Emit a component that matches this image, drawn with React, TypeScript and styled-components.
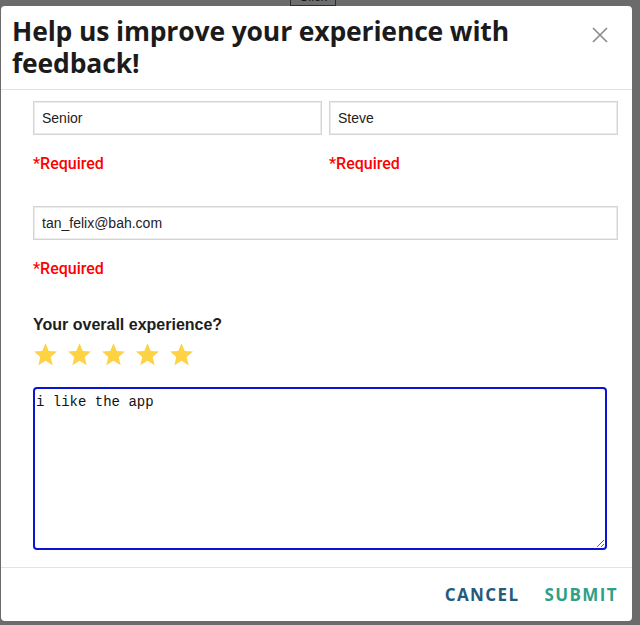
import React from "react";
import styled, { createGlobalStyle } from "styled-components";

const Global = createGlobalStyle`
  html, body { margin: 0; padding: 0; }
  body { background: #6b6b6b; font-family: "Liberation Sans", Arial, sans-serif; }
`;

const Page = styled.div`
  width: 640px;
  height: 625px;
  background: #6b6b6b;
  overflow: hidden;
  display: flex;
  flex-direction: column;
  align-items: flex-start;
`;

const BehindStrip = styled.div`
  height: 6px;
  width: 100%;
  overflow: hidden;
  display: flex;
  justify-content: center;
  align-items: flex-end;
`;

const BehindButton = styled.button`
  margin-left: -14px;
  height: 18px;
  padding: 0 8px;
  background: #6e6e6e;
  border: 1px solid #2e2e2e;
  color: #1a1a1a;
  font: 13px "Liberation Sans", Arial, sans-serif;
  line-height: 16px;
  display: flex;
  align-items: flex-end;
`;

const Modal = styled.div`
  margin-left: 1px;
  width: 631px;
  height: 615px;
  background: #fff;
  border-radius: 4px;
  display: flex;
  flex-direction: column;
`;

const Header = styled.div`
  height: 84px;
  box-sizing: border-box;
  border-bottom: 1px solid #e3e3e3;
  display: flex;
  align-items: flex-start;
  justify-content: space-between;
  padding: 9px 22px 0 11px;
`;

const Title = styled.h1`
  margin: 0;
  font-family: "Open Sans", sans-serif;
  font-weight: 700;
  font-size: 26.5px;
  line-height: 32px;
  color: #1b1b1b;
  width: 540px;
  letter-spacing: -0.15px;
`;

const CloseButton = styled.button`
  border: none;
  background: none;
  padding: 0;
  margin-top: 10px;
  width: 20px;
  height: 20px;
  display: flex;
  align-items: center;
  justify-content: center;
  cursor: pointer;
`;

const Body = styled.div`
  flex: 1;
  padding: 11px 14px 0 32px;
  display: flex;
  flex-direction: column;
  border-bottom: 1px solid #e3e3e3;
`;

const Row = styled.div`
  display: grid;
  grid-template-columns: 1fr 1fr;
  column-gap: 7px;
`;

const Field = styled.div`
  display: flex;
  flex-direction: column;
`;

const Input = styled.input`
  box-sizing: border-box;
  height: 34px;
  width: 100%;
  border: 1px solid #d4d4d4;
  box-shadow: inset 0 0 0 1px #ececec;
  padding: 0 8px;
  font: 14px "Liberation Sans", Arial, sans-serif;
  color: #222;
  outline: none;
`;

const Required = styled.div`
  font-family: Roboto, sans-serif;
  font-weight: 500;
  font-size: 16px;
  color: #ff0000;
  margin-top: 19px;
  line-height: 19px;
  height: 19px;
`;

const EmailField = styled(Field)`
  margin-top: 33px;
`;

const Label = styled.div`
  margin-top: 37px;
  font-family: "Liberation Sans", Arial, sans-serif;
  font-weight: 700;
  font-size: 16px;
  color: #1d1d1d;
  line-height: 19px;
`;

const Stars = styled.div`
  display: flex;
  gap: 9px;
  margin-top: 8px;
`;

const TextArea = styled.textarea`
  box-sizing: border-box;
  margin-top: 20px;
  width: 574px;
  height: 163px;
  border: 2px solid #0a14d2;
  border-radius: 4px;
  padding: 5px 1px;
  font: 14px "Liberation Mono", "Courier New", monospace;
  color: #111;
  outline: none;
  resize: both;
`;

const Footer = styled.div`
  height: 53px;
  display: flex;
  justify-content: flex-end;
  align-items: center;
  gap: 25px;
  padding: 0 14px 0 0;
`;

const ActionButton = styled.button<{ $tone: string }>`
  border: none;
  background: none;
  padding: 0;
  font-family: "Open Sans", sans-serif;
  font-weight: 700;
  font-size: 17px;
  letter-spacing: 1.4px;
  color: ${(p) => p.$tone};
  cursor: pointer;
`;

const Star = () => (
  <svg width="25" height="25" viewBox="0 0 24 24">
    <path
      d="M12 1.2 L15.1 8.6 L23 9.2 L17 14.4 L18.9 22.2 L12 18 L5.1 22.2 L7 14.4 L1 9.2 L8.9 8.6 Z"
      fill="#fdd245"
    />
  </svg>
);

export default function App() {
  return (
    <>
      <Global />
      <Page>
        <BehindStrip>
          <BehindButton>Click</BehindButton>
        </BehindStrip>
        <Modal>
          <Header>
            <Title>Help us improve your experience with feedback!</Title>
            <CloseButton aria-label="close">
              <svg width="16" height="16" viewBox="0 0 16 16">
                <path d="M1 1 L15 15 M15 1 L1 15" stroke="#8a8a8a" strokeWidth="1.6" />
              </svg>
            </CloseButton>
          </Header>
          <Body>
            <Row>
              <Field>
                <Input defaultValue="Senior" />
                <Required>*Required</Required>
              </Field>
              <Field>
                <Input defaultValue="Steve" />
                <Required>*Required</Required>
              </Field>
            </Row>
            <EmailField>
              <Input defaultValue="tan_felix@bah.com" />
              <Required>*Required</Required>
            </EmailField>
            <Label>Your overall experience?</Label>
            <Stars>
              {[0, 1, 2, 3, 4].map((i) => (
                <Star key={i} />
              ))}
            </Stars>
            <TextArea defaultValue="i like the app" />
          </Body>
          <Footer>
            <ActionButton $tone="#245b7d">CANCEL</ActionButton>
            <ActionButton $tone="#2f9f88">SUBMIT</ActionButton>
          </Footer>
        </Modal>
      </Page>
    </>
  );
}
